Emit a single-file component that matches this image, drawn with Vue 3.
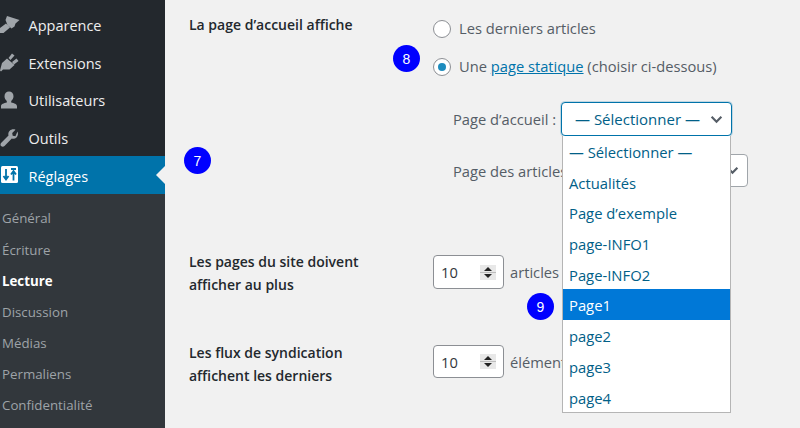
<script setup>
const menu = [
  { label: 'Apparence', icon: 'brush' },
  { label: 'Extensions', icon: 'plug' },
  { label: 'Utilisateurs', icon: 'user' },
  { label: 'Outils', icon: 'tool' },
]
const sub = ['Général', 'Écriture', 'Lecture', 'Discussion', 'Médias', 'Permaliens', 'Confidentialité']
const options = ['— Sélectionner —', 'Actualités', 'Page d’exemple', 'page-INFO1', 'Page-INFO2', 'Page1', 'page2', 'page3', 'page4']
</script>

<template>
  <div class="page">
    <aside class="sidebar">
      <ul class="menu">
        <li v-for="m in menu" :key="m.label" class="item">
          <svg class="ico" viewBox="0 0 20 20">
            <path v-if="m.icon === 'brush'" d="M7 1 19.500 5 15.500 8.500 14.500 11.500 11.500 13.500 7.500 10 5.500 5zM6 8.500 0 13v5h3.500L10 12.500z" />
            <path v-else-if="m.icon === 'plug'" d="M0 18.500 2 11 7 6.500 14.500 13 9.500 17.500 3 17.500 1 19.500zM8.500 6 12 1.500 14.500 3.500 10.500 8zM12 10 16.500 6.500 18.500 9 14 12.500z" />
            <path v-else-if="m.icon === 'user'" d="M9 1.500c2.600 0 4.500 2 4.500 4.800 0 2-1 3.800-2.300 4.700v1.500c3 .7 5.800 1.600 5.800 3.700v2.300H1v-2.300c0-2.100 2.900-3 5.800-3.700V11C5.500 10.100 4.500 8.300 4.500 6.300 4.500 3.500 6.400 1.500 9 1.500z" />
            <path v-else d="M17.500 3.500c1 2.200.4 4.500-1 6-1.300 1.200-3 1.500-4.700 1L4.500 18c-1 1-2.500 1-3.400.1S.3 15.700 1.300 14.700L8.500 7.500c-.5-1.700-.1-3.500 1.200-4.700 1.500-1.500 3.800-1.900 5.800-1l-3.300 3.300.5 2.700 2.700.5z" />
          </svg>
          <span class="txt">{{ m.label }}</span>
        </li>
        <li class="item current">
          <svg class="ico set" viewBox="0 0 20 20">
            <rect x="1" y="1" width="17" height="17" rx="1.500" fill="#fff" />
            <path d="M6 4v10M3.500 11 6 14.500 8.500 11M13.500 15.500V7M11 9.500 13.500 6 16 9.500M11 4h5" stroke="#0073aa" stroke-width="1.800" fill="none" />
          </svg>
          <span class="txt">Réglages</span>
        </li>
      </ul>
      <ul class="submenu">
        <li v-for="s in sub" :key="s" :class="{ active: s === 'Lecture' }">{{ s }}</li>
      </ul>
    </aside>

    <main class="content">
      <section class="row first">
        <h3 class="th">La page d’accueil affiche</h3>
        <div class="td">
          <label class="radio"><i class="dot"></i>Les derniers articles</label>
          <label class="radio"><i class="dot on"></i>Une&nbsp;<a>page statique</a>&nbsp;(choisir ci-dessous)</label>
          <div class="pick one">
            <span class="lab">Page d’accueil :</span>
            <div class="select focus">
              <span>— Sélectionner —</span>
              <svg class="chev" viewBox="0 0 12 8"><path d="M1.500 1.500 6 6l4.500-4.500" /></svg>
            </div>
            <ul class="dropdown">
              <li v-for="o in options" :key="o" :class="{ sel: o === 'Page1' }">{{ o }}</li>
            </ul>
          </div>
          <div class="pick two">
            <span class="lab auto">Page des articles :</span>
            <div class="select back">
              <svg class="chev" viewBox="0 0 12 8"><path d="M1.500 1.500 6 6l4.500-4.500" /></svg>
            </div>
          </div>
        </div>
      </section>

      <section class="row second">
        <h3 class="th">Les pages du site doivent<br />afficher au plus</h3>
        <div class="td inline">
          <div class="num"><span>10</span><i class="spin"></i></div>
          <span>articles</span>
        </div>
      </section>

      <section class="row third">
        <h3 class="th">Les flux de syndication<br />affichent les derniers</h3>
        <div class="td inline">
          <div class="num"><span>10</span><i class="spin"></i></div>
          <span>éléments</span>
        </div>
      </section>

      <span class="badge b7">7</span>
      <span class="badge b8">8</span>
      <span class="badge b9">9</span>
    </main>
  </div>
</template>

<style scoped>
.page {
  display: flex;
  width: 800px;
  height: 428px;
  overflow: hidden;
  background: #f1f1f1;
  font-family: "Open Sans", "Noto Sans", sans-serif;
  color: #444;
}
ul { list-style: none; margin: 0; padding: 0; }

.sidebar { width: 165px; flex: none; background: #23282d; }
.menu { padding-top: 6px; }
.item {
  position: relative;
  display: flex;
  align-items: center;
  gap: 8.500px;
  height: 37.6px;
  color: #eee;
  font-size: 14.500px;
}
.txt { padding-top: 2px; }
.ico { width: 20px; height: 20px; flex: none; fill: #a0a5aa; }
.current { background: #0073aa; color: #fff; }
.current::after {
  content: "";
  position: absolute;
  right: 0;
  top: 50%;
  margin-top: -9px;
  border: 9px solid transparent;
  border-right-color: #f1f1f1;
  border-left-width: 0;
}
.submenu {
  background: #32373c;
  padding-top: 9.500px;
  height: 234px;
  color: #9ea3a8;
  font-size: 13.300px;
}
.submenu li { height: 31.100px; line-height: 31.100px; padding-left: 2px; }
.submenu .active { color: #fff; font-weight: 700; }

.content { position: relative; flex: 1; min-width: 0; padding-left: 24px; }
.row { display: flex; }
.first { height: 250px; padding-top: 13px; box-sizing: border-box; }
.second { height: 91px; }
.th {
  width: 244px;
  flex: none;
  margin: 0;
  font-size: 14px;
  line-height: 23px;
  font-weight: 600;
  color: #23282d;
}
.first .th { line-height: 24px; }
.td { font-size: 14.700px; color: #555d66; }
.radio { display: flex; align-items: center; height: 38px; padding-bottom: 2px; box-sizing: border-box; }
.radio:first-child { margin-top: -3px; }
.dot {
  width: 16px;
  height: 16px;
  margin: 2px 8px 0 0;
  border: 1px solid #8c8f94;
  border-radius: 50%;
  background: #fff;
  display: grid;
  place-items: center;
}
.dot.on::after {
  content: "";
  width: 8px;
  height: 8px;
  border-radius: 50%;
  background: #1e8cbe;
}
.radio a { color: #0073aa; text-decoration: underline; }
.pick { display: flex; align-items: center; padding-left: 20px; position: relative; }
.one { margin-top: 16px; height: 34px; }
.two { margin-top: 18px; height: 33px; }
.lab { width: 108px; flex: none; white-space: nowrap; }
.lab.auto { width: 130px; }
.select {
  box-sizing: border-box;
  height: 100%;
  border-radius: 4px;
  background: #fff;
  display: flex;
  align-items: center;
  justify-content: space-between;
}
.focus {
  width: 171px;
  border: 1px solid #0073aa;
  box-shadow: 0 0 0 1px #0073aa33;
  color: #016087;
  padding: 0 8px 0 13px;
  font-size: 15px;
}
.back {
  width: 165px;
  border: 1px solid #a0a5aa;
  justify-content: flex-end;
  padding-right: 8px;
}
.chev { width: 13px; height: 9px; fill: none; stroke: #555d66; stroke-width: 2; }
.dropdown {
  position: absolute;
  z-index: 2;
  left: 129px;
  top: 34px;
  width: 167px;
  padding-bottom: 0;
  background: #fff;
  border: 1px solid #b5b5b5;
  border-top: 0;
  color: #016087;
  font-size: 14.800px;
}
.dropdown li { height: 30.700px; line-height: 33px; padding-left: 6px; }
.dropdown .sel { background: #0078d7; color: #fff; }

.inline { display: flex; align-items: center; gap: 6px; height: 34px; }
.num {
  box-sizing: border-box;
  width: 71px;
  height: 100%;
  border: 1px solid #8c8f94;
  border-radius: 4px;
  background: #fff;
  display: flex;
  align-items: center;
  justify-content: space-between;
  padding: 0 7px 0 7px;
  color: #32373c;
}
.spin {
  width: 16px;
  height: 15px;
  background: linear-gradient(#e8e8e8 0 47%, #bdbdbd 47% 53%, #e8e8e8 53%);
  position: relative;
}
.spin::before, .spin::after {
  content: "";
  position: absolute;
  left: 4px;
  border: 4px solid transparent;
}
.spin::before { top: -2px; border-bottom-color: #222; }
.spin::after { bottom: -2px; border-top-color: #222; }
.second .inline { margin-top: 5px; }
.third .inline { margin-top: 4px; height: 33px; }

.badge {
  position: absolute;
  width: 27px;
  height: 27px;
  border-radius: 50%;
  background: #0000ff;
  color: #fff;
  display: grid;
  place-items: center;
  font-size: 14px;
  font-family: "Liberation Sans", sans-serif;
}
.b7 { left: 19px; top: 147px; }
.b8 { left: 228px; top: 45px; }
.b9 { left: 362px; top: 293px; }
</style>
